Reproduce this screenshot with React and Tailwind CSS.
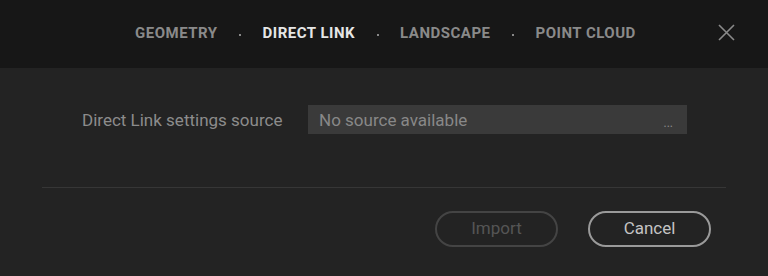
export default function App() {
  const tabs = ["GEOMETRY", "DIRECT LINK", "LANDSCAPE", "POINT CLOUD"];
  const active = "DIRECT LINK";

  return (
    <div className="w-[768px] h-[276px] bg-[#232323] flex flex-col font-['Roboto',sans-serif] overflow-hidden">
      <div className="h-[68px] bg-[#171717] flex items-center relative">
        <div className="flex items-center pl-[135px] -mt-[2px]">
          {tabs.map((t, i) => (
            <div key={t} className="flex items-center">
              {i > 0 && <span className="w-[2px] h-[2px] bg-[#888] mx-[21.5px] mt-[3px]" />}
              <span
                className={`text-[15px] font-bold tracking-[0.5px] ${
                  t === active ? "text-[#e6e6e6]" : "text-[#8a8a8a]"
                }`}
              >
                {t}
              </span>
            </div>
          ))}
        </div>
        <button className="absolute right-[33px] top-[24px] w-[17px] h-[17px]">
          <svg viewBox="0 0 17 17" className="w-[17px] h-[17px]" fill="none" stroke="#8a8a8a" strokeWidth="1.6">
            <path d="M1 1L16 16M16 1L1 16" />
          </svg>
        </button>
      </div>

      <div className="flex items-center pt-[37px] pl-[82px]">
        <span className="text-[17px] text-[#8c8c8c] w-[226px] pt-[3px]">Direct Link settings source</span>
        <div className="w-[379px] h-[29px] bg-[#3a3a3a] flex items-center justify-between pl-[11px] pr-[14px]">
          <span className="text-[17px] text-[#888] pt-[3px]">No source available</span>
          <span className="text-[12px] text-[#8a8a8a] leading-none pt-[6px]">...</span>
        </div>
      </div>

      <div className="mx-[42px] mt-[53px] h-px bg-[#363636]" />

      <div className="flex justify-end gap-[30px] pr-[57px] pt-[23px]">
        <button className="w-[123px] h-[36px] rounded-full border-2 border-[#444] text-[17px] text-[#555]">
          Import
        </button>
        <button className="w-[123px] h-[36px] rounded-full border-2 border-[#9a9a9a] text-[17px] text-[#c4c4c4]">
          Cancel
        </button>
      </div>
    </div>
  );
}
